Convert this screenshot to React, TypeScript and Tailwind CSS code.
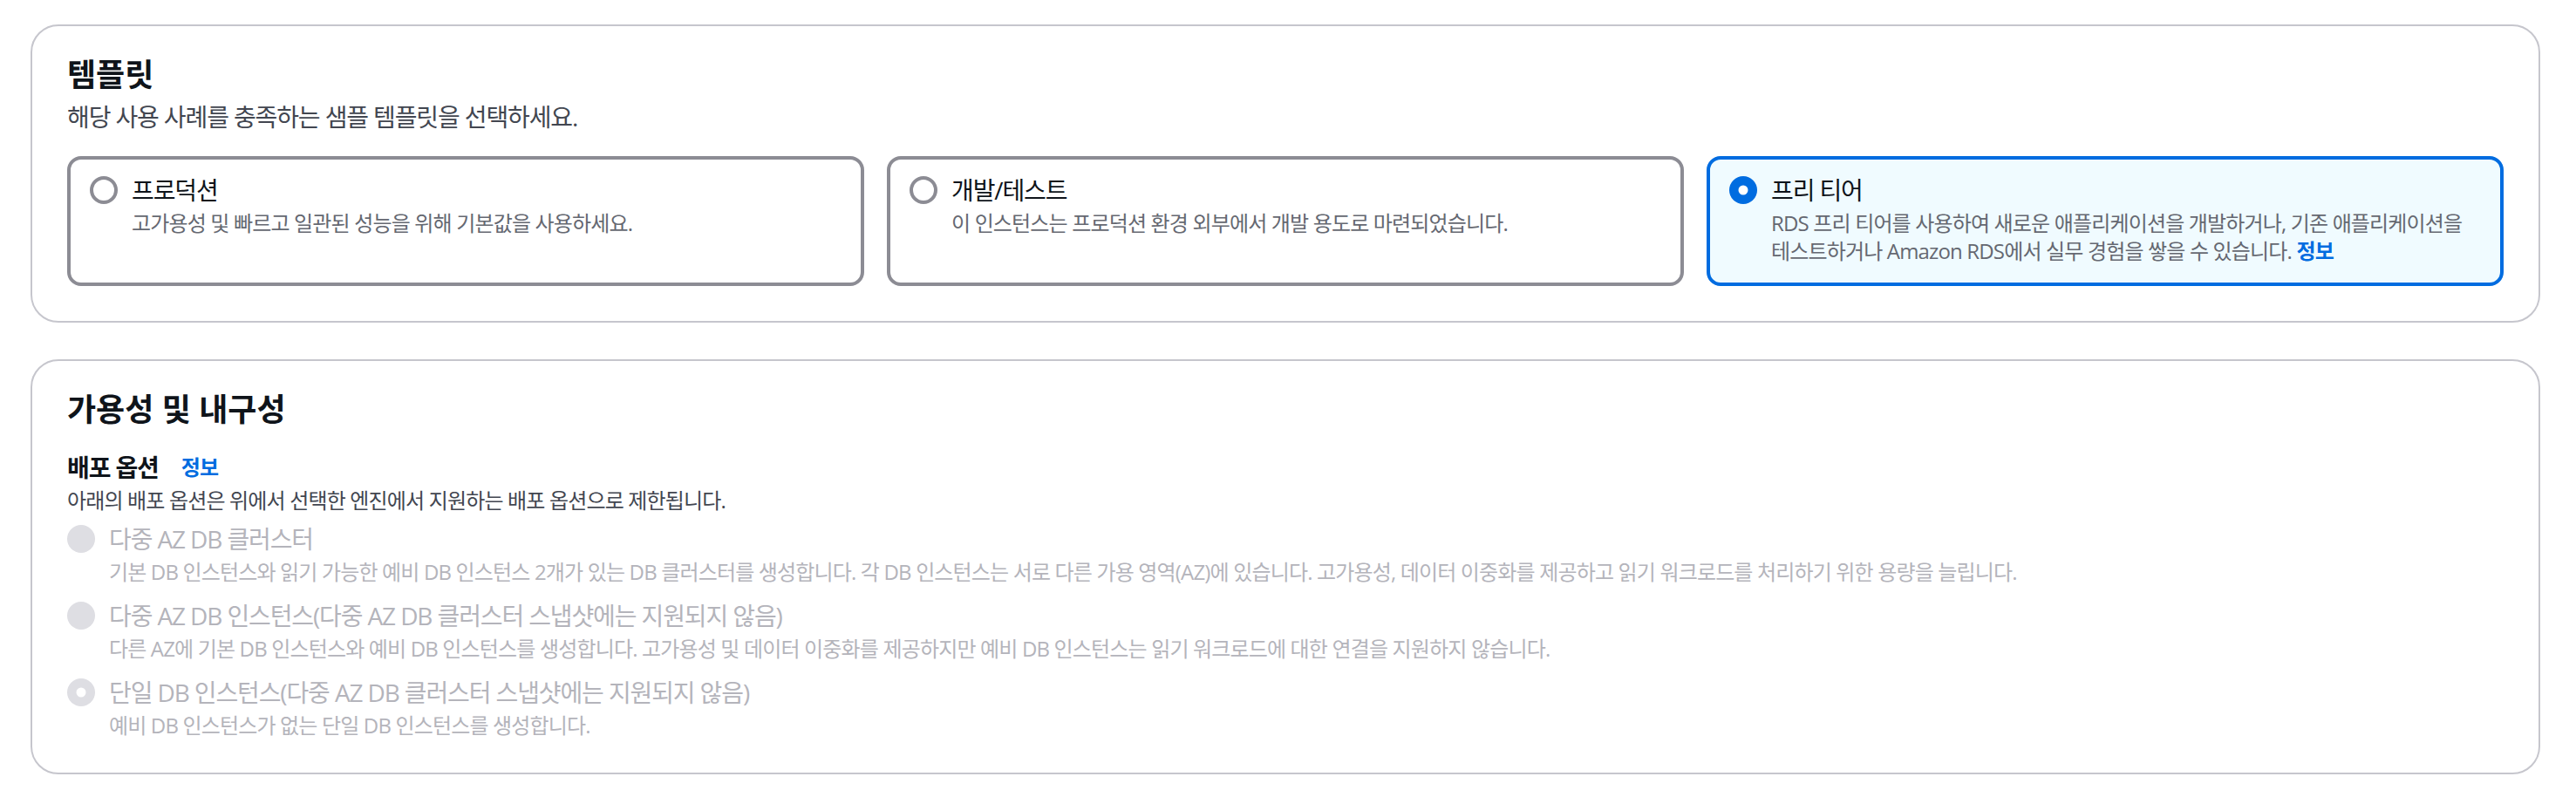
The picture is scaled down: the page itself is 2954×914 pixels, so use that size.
import React from 'react';

type RadioState = 'off' | 'on' | 'disabled' | 'disabled-on';

const RadioMark: React.FC<{ state: RadioState }> = ({ state }) => {
  if (state === 'on') {
    return (
      <svg width="32" height="32" viewBox="0 0 32 32" className="shrink-0">
        <circle cx="16" cy="16" r="16" fill="#006ce0" />
        <circle cx="16" cy="16" r="5.5" fill="#ffffff" />
      </svg>
    );
  }
  if (state === 'disabled' || state === 'disabled-on') {
    return (
      <svg width="32" height="32" viewBox="0 0 32 32" className="shrink-0">
        <circle cx="16" cy="16" r="16" fill="#dedee3" />
        {state === 'disabled-on' && <circle cx="16" cy="16" r="5.5" fill="#ffffff" />}
      </svg>
    );
  }
  return (
    <svg width="32" height="32" viewBox="0 0 32 32" className="shrink-0">
      <circle cx="16" cy="16" r="14" fill="#ffffff" stroke="#8c8c94" strokeWidth="4" />
    </svg>
  );
};

interface TileProps {
  title: string;
  description: React.ReactNode;
  selected?: boolean;
}

const Tile: React.FC<TileProps> = ({ title, description, selected }) => (
  <div
    className={
      selected
        ? 'rounded-[16px] border-4 border-[#006ce0] bg-[#f0fbff] pl-[22px] pr-[12px] pt-[13px] pb-[20px]'
        : 'rounded-[16px] border-4 border-[#8c8c94] bg-white pl-[22px] pr-[12px] pt-[13px] pb-[20px]'
    }
  >
    <div className="flex items-start gap-[16px]">
      <div className="mt-[6px]">
        <RadioMark state={selected ? 'on' : 'off'} />
      </div>
      <div className="flex flex-col">
        <span className="text-[28px] leading-[44px] tracking-[-0.04em] text-[#0f141a]">{title}</span>
        <span className="break-keep text-[24px] leading-[32px] tracking-[-0.035em] text-[#656871]">{description}</span>
      </div>
    </div>
  </div>
);

interface OptionProps {
  label: string;
  description: string;
  checked?: boolean;
}

const DisabledOption: React.FC<OptionProps> = ({ label, description, checked }) => (
  <div className="flex items-start gap-[16px]">
    <div className="mt-[6px]">
      <RadioMark state={checked ? 'disabled-on' : 'disabled'} />
    </div>
    <div className="flex flex-col">
      <span className="text-[28px] leading-[44px] tracking-[-0.04em] text-[#b4b4bb]">{label}</span>
      <span className="break-keep text-[24px] leading-[32px] tracking-[-0.035em] text-[#b4b4bb]">{description}</span>
    </div>
  </div>
);

export default function App() {
  return (
    <div className="min-h-screen bg-white pl-[35px] pr-[41px] pt-[28px] font-['Open_Sans','Noto_Sans_CJK_KR',sans-serif]">
      <section className="rounded-[32px] border-2 border-[#c6c6cd] px-[40px] pt-[34px] pb-[40px]">
        <h2 className="text-[36px] leading-[44px] font-bold text-[#0f141a]">템플릿</h2>
        <p className="mt-[6px] text-[28px] leading-[40px] tracking-[-0.04em] text-[#424650]">
          해당 사용 사례를 충족하는 샘플 템플릿을 선택하세요.
        </p>
        <div className="mt-[25px] grid grid-cols-3 gap-[26px]">
          <Tile title="프로덕션" description="고가용성 및 빠르고 일관된 성능을 위해 기본값을 사용하세요." />
          <Tile title="개발/테스트" description="이 인스턴스는 프로덕션 환경 외부에서 개발 용도로 마련되었습니다." />
          <Tile
            selected
            title="프리 티어"
            description={
              <>
                RDS 프리 티어를 사용하여 새로운 애플리케이션을 개발하거나, 기존 애플리케이션을 테스트하거나 Amazon
                RDS에서 실무 경험을 쌓을 수 있습니다. <span className="font-bold text-[#006ce0]">정보</span>
              </>
            }
          />
        </div>
      </section>

      <section className="mt-[42px] rounded-[32px] border-2 border-[#c6c6cd] px-[40px] pt-[34px] pb-[38px]">
        <h2 className="text-[36px] leading-[44px] font-bold text-[#0f141a]">가용성 및 내구성</h2>
        <div className="mt-[22px] flex items-center">
          <span className="text-[28px] leading-[44px] font-bold tracking-[-0.04em] text-[#0f141a]">배포 옵션</span>
          <span className="ml-[26px] text-[24px] leading-[44px] font-bold tracking-[-0.035em] text-[#006ce0]">정보</span>
        </div>
        <p className="text-[24px] leading-[32px] tracking-[-0.035em] text-[#424650]">
          아래의 배포 옵션은 위에서 선택한 엔진에서 지원하는 배포 옵션으로 제한됩니다.
        </p>
        <div className="mt-[6px] flex flex-col gap-[12px]">
          <DisabledOption
            label="다중 AZ DB 클러스터"
            description="기본 DB 인스턴스와 읽기 가능한 예비 DB 인스턴스 2개가 있는 DB 클러스터를 생성합니다. 각 DB 인스턴스는 서로 다른 가용 영역(AZ)에 있습니다. 고가용성, 데이터 이중화를 제공하고 읽기 워크로드를 처리하기 위한 용량을 늘립니다."
          />
          <DisabledOption
            label="다중 AZ DB 인스턴스(다중 AZ DB 클러스터 스냅샷에는 지원되지 않음)"
            description="다른 AZ에 기본 DB 인스턴스와 예비 DB 인스턴스를 생성합니다. 고가용성 및 데이터 이중화를 제공하지만 예비 DB 인스턴스는 읽기 워크로드에 대한 연결을 지원하지 않습니다."
          />
          <DisabledOption
            checked
            label="단일 DB 인스턴스(다중 AZ DB 클러스터 스냅샷에는 지원되지 않음)"
            description="예비 DB 인스턴스가 없는 단일 DB 인스턴스를 생성합니다."
          />
        </div>
      </section>
    </div>
  );
}
